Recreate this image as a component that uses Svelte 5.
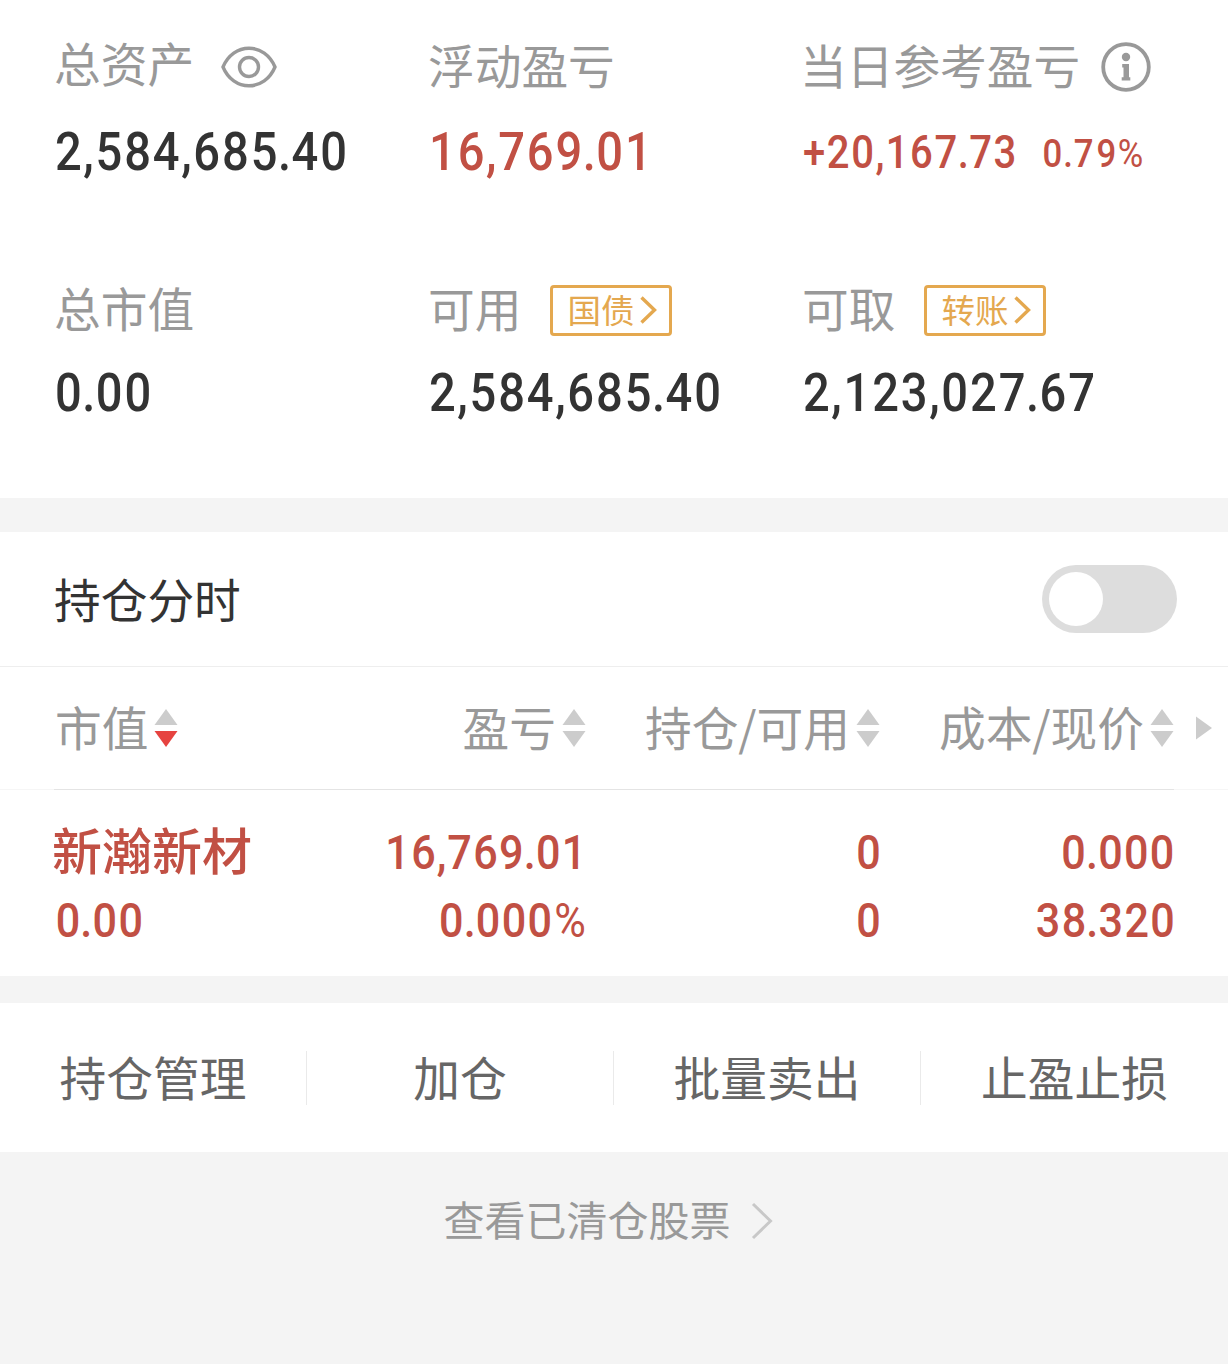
<!-- Account overview: asset totals, the position table and its actions. -->
<script lang="ts">
  interface Column {
    label: string;
    active?: boolean;
  }

  const columns: Column[] = [
    { label: '市值', active: true },
    { label: '盈亏' },
    { label: '持仓/可用' },
    { label: '成本/现价' },
  ];

  const position = {
    name: '新瀚新材',
    value: '0.00',
    profit: '16,769.01',
    profitRate: '0.000%',
    held: '0',
    available: '0',
    cost: '0.000',
    price: '38.320',
  };

  const actions = ['持仓管理', '加仓', '批量卖出', '止盈止损'];

  let intraday = $state(false);

  const charClass = (c: string): string =>
    c === '.' ? 'dot' : c === ',' ? 'comma' : c === '%' ? 'pct' : c === '+' ? 'plus' : 'digit';
</script>

{#snippet num(text: string)}
  <span class="num">{#each text as c}<span class={charClass(c)}>{c}</span>{/each}</span>
{/snippet}

{#snippet tag(text: string)}
  <button type="button" class="tag">
    <span>{text}</span>
    <svg class="tag-arrow" viewBox="0 0 17 28" aria-hidden="true"><path d="M1.5 1.5 14.5 14 1.5 26.5" /></svg>
  </button>
{/snippet}

<main>
  <section class="summary">
    <div class="cell">
      <div class="label">
        <span class="text raised">总资产</span>
        <svg class="eye" viewBox="0 0 56 42" aria-hidden="true">
          <path d="M2 21C7 9 17 2.2 28 2.2S49 9 54 21C49 33 39 39.8 28 39.8S7 33 2 21Z" />
          <circle cx="28" cy="21" r="9.5" />
        </svg>
      </div>
      <div class="value">{@render num('2,584,685.40')}</div>
    </div>
    <div class="cell">
      <div class="label"><span class="text">浮动盈亏</span></div>
      <div class="value red">{@render num('16,769.01')}</div>
    </div>
    <div class="cell">
      <div class="label">
        <span class="text daily">当日参考盈亏</span>
        <svg class="info" viewBox="0 0 50 50" aria-hidden="true">
          <circle class="ring" cx="25" cy="25" r="22.8" />
          <circle cx="25" cy="15" r="4.2" />
          <path d="M21.2 22H28V35.2H29.3V38.6H20.7V35.2H22.5V25.4H21.2Z" />
        </svg>
      </div>
      <div class="value red today">
        {@render num('+20,167.73')}
        <span class="rate">{@render num('0.79%')}</span>
      </div>
    </div>
    <div class="cell">
      <div class="label"><span class="text">总市值</span></div>
      <div class="value">{@render num('0.00')}</div>
    </div>
    <div class="cell">
      <div class="label"><span class="text">可用</span>{@render tag('国债')}</div>
      <div class="value">{@render num('2,584,685.40')}</div>
    </div>
    <div class="cell">
      <div class="label"><span class="text">可取</span>{@render tag('转账')}</div>
      <div class="value">{@render num('2,123,027.67')}</div>
    </div>
  </section>

  <section class="positions">
    <div class="toggle-row">
      <span class="text">持仓分时</span>
      <button
        type="button"
        class="switch"
        class:on={intraday}
        role="switch"
        aria-checked={intraday}
        aria-label="持仓分时"
        onclick={() => (intraday = !intraday)}
      ><span class="knob"></span></button>
    </div>

    <div class="grid head">
      {#each columns as col}
        <div class="th">
          <span class="text">{col.label}</span>
          <svg class="sort" class:active={col.active} viewBox="0 0 24 40" aria-hidden="true">
            <path d="M12 1 23.5 17H.5Z" />
            <path class="down" d="M.5 23H23.5L12 39Z" />
          </svg>
        </div>
      {/each}
      <svg class="more" viewBox="0 0 16 24" aria-hidden="true"><path d="M0 .5 16 12 0 23.5Z" /></svg>
    </div>
    <div class="rule"></div>

    <div class="grid body">
      <div class="td">
        <span class="name">{position.name}</span>
        {@render num(position.value)}
      </div>
      <div class="td">{@render num(position.profit)}{@render num(position.profitRate)}</div>
      <div class="td">{@render num(position.held)}{@render num(position.available)}</div>
      <div class="td">{@render num(position.cost)}{@render num(position.price)}</div>
    </div>
  </section>

  <nav class="actions">
    {#each actions as action}
      <button type="button"><span class="text">{action}</span></button>
    {/each}
  </nav>

  <footer>
    <span class="text">查看已清仓股票</span>
    <svg viewBox="0 0 22 38" aria-hidden="true"><path d="M2 2 19.5 19 2 36" /></svg>
  </footer>
</main>

<style>
  :global(body) {
    margin: 0;
    background: #f4f4f4;
  }
  main {
    width: 1228px;
    min-height: 1364px;
    background: #f4f4f4;
    color: #333;
    font-family: 'Noto Sans CJK SC', sans-serif;
    font-size: 46.7px;
  }
  button {
    font: inherit;
    color: inherit;
    background: none;
    border: 0;
    padding: 0;
  }
  svg { flex-shrink: 0; }

  /* The CJK face sits low in its line box; the bottom margin lifts it back. */
  .text {
    display: block;
    margin-bottom: 6px;
    line-height: 54px;
    white-space: nowrap;
  }

  /* Figures: medium Roboto, narrowed towards a DIN-like shape. */
  .num {
    display: inline-flex;
    font-family: Roboto, sans-serif;
    font-weight: 500;
    line-height: 1;
    transform: scaleX(0.88);
    transform-origin: left center;
  }
  .num span {
    display: flex;
    flex-shrink: 0;
    justify-content: center;
  }
  .digit { width: 0.61em; }
  .dot { width: 0.255em; }
  .comma { width: 0.25em; }
  .plus { width: 0.6em; }
  .num .pct {
    width: 0.74em;
    font-weight: 400;
  }

  .summary {
    display: grid;
    grid-template-columns: repeat(3, 374px);
    grid-template-rows: 243px 228px;
    height: 471px;
    padding: 27px 0 0 54px;
    background: #fff;
  }
  .label {
    display: flex;
    align-items: center;
    height: 80px;
    color: #999;
  }
  .raised { margin-bottom: 10px; }
  .daily { margin-left: -2px; }
  .value {
    display: flex;
    align-items: center;
    height: 90px;
    font-size: 53.5px;
  }
  .cell:nth-child(n + 4) .value { height: 86px; }
  .red { color: #c15044; }
  .value.today {
    height: 91px;
    font-size: 45.5px;
  }
  .rate {
    display: flex;
    margin-left: -6px;
    font-size: 39.5px;
  }
  .rate .num { margin-top: 3px; }
  .rate .num .digit { width: 0.65em; }
  .eye {
    width: 56px;
    height: 42px;
    margin-left: 27px;
    fill: none;
    stroke: #999;
    stroke-width: 3.4;
  }
  .info {
    width: 50px;
    height: 50px;
    margin-left: 21px;
    fill: #999;
  }
  .ring {
    fill: none;
    stroke: #999;
    stroke-width: 3.8;
  }
  .tag {
    display: flex;
    align-items: center;
    box-sizing: border-box;
    width: 122px;
    height: 51px;
    margin-left: 29px;
    padding-left: 14px;
    border: 3px solid #e4a84f;
    border-radius: 4px;
    color: #e4a84f;
    font-size: 33.5px;
    line-height: 46px;
  }
  .tag span { margin-bottom: 2px; }
  .tag-arrow {
    width: 17px;
    height: 28px;
    margin-left: 6px;
    fill: none;
    stroke: currentColor;
    stroke-width: 3.4;
  }

  .positions {
    height: 444px;
    margin-top: 34px;
    background: #fff;
  }
  .toggle-row {
    display: flex;
    align-items: center;
    justify-content: space-between;
    height: 134px;
    padding: 0 51px 0 54px;
    border-bottom: 1px solid #eee;
  }
  .toggle-row .text { margin-bottom: 3px; }
  .switch {
    width: 135px;
    height: 68px;
    padding: 7px;
    border-radius: 34px;
    background: #ddd;
  }
  .switch.on { background: #c15044; }
  .knob {
    display: block;
    width: 54px;
    height: 54px;
    border-radius: 50%;
    background: #fff;
  }
  .switch.on .knob { margin-left: auto; }

  .grid {
    display: grid;
    grid-template-columns: 200px 332px 294px 294px 1fr;
    padding-left: 54px;
  }
  .head {
    align-items: center;
    height: 122px;
    color: #999;
  }
  .th {
    display: flex;
    align-items: center;
    justify-content: flex-end;
    gap: 6px;
  }
  .th:first-child {
    justify-content: flex-start;
    padding-left: 1px;
  }
  .th .text { margin-bottom: 4px; }
  .sort {
    width: 24px;
    height: 40px;
    fill: #ccc;
  }
  .active .down { fill: #e64340; }
  .more {
    width: 16px;
    height: 24px;
    margin-left: 22px;
    fill: #ccc;
  }
  /* Fainter at both page edges than under the columns. */
  .rule {
    height: 1px;
    border: solid #f6f6f6;
    border-width: 0 54px;
    background: #e4e4e4;
  }
  .body {
    padding-top: 28px;
    color: #c15044;
    font-size: 49px;
  }
  .body .digit { width: 0.6em; }
  .body .comma { width: 0.24em; }
  .body .num .pct { width: 0.8em; }
  .td {
    display: grid;
    grid-template-rows: 68px 68px;
    align-items: center;
    justify-items: end;
  }
  .td .num {
    margin-right: -1px;
    transform-origin: right center;
  }
  .td:first-child { justify-items: start; }
  .td:first-child .num {
    margin-left: 1px;
    transform-origin: left center;
  }
  .name {
    margin: 0 0 8px -2px;
    font-size: 50px;
    font-weight: 500;
    line-height: 60px;
  }

  .actions {
    display: grid;
    grid-template-columns: repeat(4, 1fr);
    align-items: center;
    height: 149px;
    margin-top: 27px;
    background: #fff;
    color: #666;
  }
  .actions button { height: 54px; }
  .actions .text { margin: -2px 0 2px; }
  .actions button:not(:last-child) { border-right: 1px solid #eaeaea; }

  footer {
    display: flex;
    align-items: center;
    justify-content: center;
    height: 137px;
    padding-right: 12px;
    color: #999;
    font-size: 41px;
  }
  footer svg {
    width: 22px;
    height: 38px;
    margin-left: 20px;
    fill: none;
    stroke: #c8c8c8;
    stroke-width: 3;
  }
</style>
